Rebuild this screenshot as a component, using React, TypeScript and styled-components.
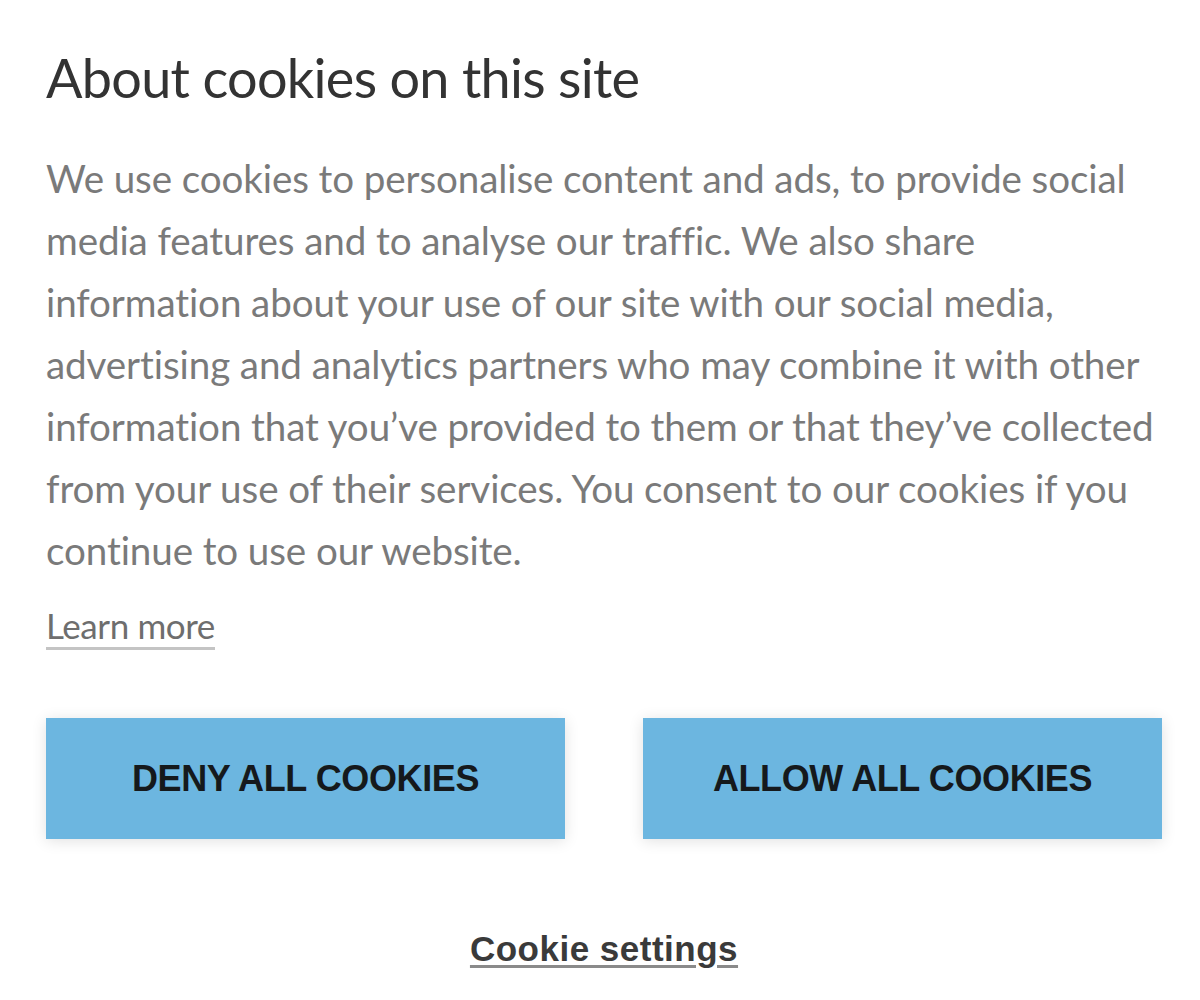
import React from "react";
import styled, { createGlobalStyle } from "styled-components";

const Global = createGlobalStyle`
  html, body { margin: 0; padding: 0; background: #ffffff; }
  body { font-family: Lato, "Open Sans", sans-serif; }
`;

const Panel = styled.div`
  box-sizing: border-box;
  width: 1200px;
  height: 1000px;
  padding: 46px 38px 0 46px;
  display: flex;
  flex-direction: column;
  background: #fff;
`;

const Title = styled.h1`
  margin: 0;
  font-family: Lato, sans-serif;
  font-weight: 400;
  font-size: 54px;
  line-height: 64px;
  letter-spacing: -0.7px;
  color: #333333;
`;

const Body = styled.p`
  margin: 37px 0 0 0;
  font-family: Lato, sans-serif;
  font-size: 38.6px;
  line-height: 62px;
  letter-spacing: -0.1px;
  color: #7a7a7a;
`;

const LearnMore = styled.a`
  align-self: flex-start;
  margin-top: 22px;
  font-family: Lato, sans-serif;
  font-size: 35px;
  line-height: 44px;
  letter-spacing: -0.4px;
  color: #6e6e6e;
  text-decoration: none;
  border-bottom: 3px solid #c4c4c4;
`;

const ButtonRow = styled.div`
  display: grid;
  grid-template-columns: 1fr 1fr;
  column-gap: 78px;
  margin-top: 68px;
`;

const Button = styled.button`
  height: 121px;
  border: none;
  border-radius: 0;
  background: #6cb6e0;
  box-shadow: 0 2px 14px rgba(0, 0, 0, 0.12);
  font-family: "Liberation Sans", Arial, sans-serif;
  font-weight: 700;
  font-size: 36px;
  letter-spacing: -0.4px;
  color: #15191c;
  text-transform: uppercase;
  cursor: pointer;
`;

const SettingsRow = styled.div`
  display: flex;
  justify-content: center;
  margin-top: 90px;
`;

const SettingsLink = styled.a`
  font-family: "Liberation Sans", Arial, sans-serif;
  font-weight: 700;
  font-size: 35px;
  line-height: 40px;
  letter-spacing: 0.5px;
  color: #3a3a3a;
  text-decoration: underline;
  text-decoration-color: #8a8a8a;
  text-decoration-thickness: 3px;
  text-underline-offset: 4px;
`;

export default function App() {
  return (
    <>
      <Global />
      <Panel>
        <Title>About cookies on this site</Title>
        <Body>
          We use cookies to personalise content and ads, to provide social media features and to
          analyse our traffic. We also share information about your use of our site with our social
          media, advertising and analytics partners who may combine it with other information that
          you’ve provided to them or that they’ve collected from your use of their services. You
          consent to our cookies if you continue to use our website.
        </Body>
        <LearnMore href="#">Learn more</LearnMore>
        <ButtonRow>
          <Button>Deny all cookies</Button>
          <Button>Allow all cookies</Button>
        </ButtonRow>
        <SettingsRow>
          <SettingsLink href="#">Cookie settings</SettingsLink>
        </SettingsRow>
      </Panel>
    </>
  );
}
